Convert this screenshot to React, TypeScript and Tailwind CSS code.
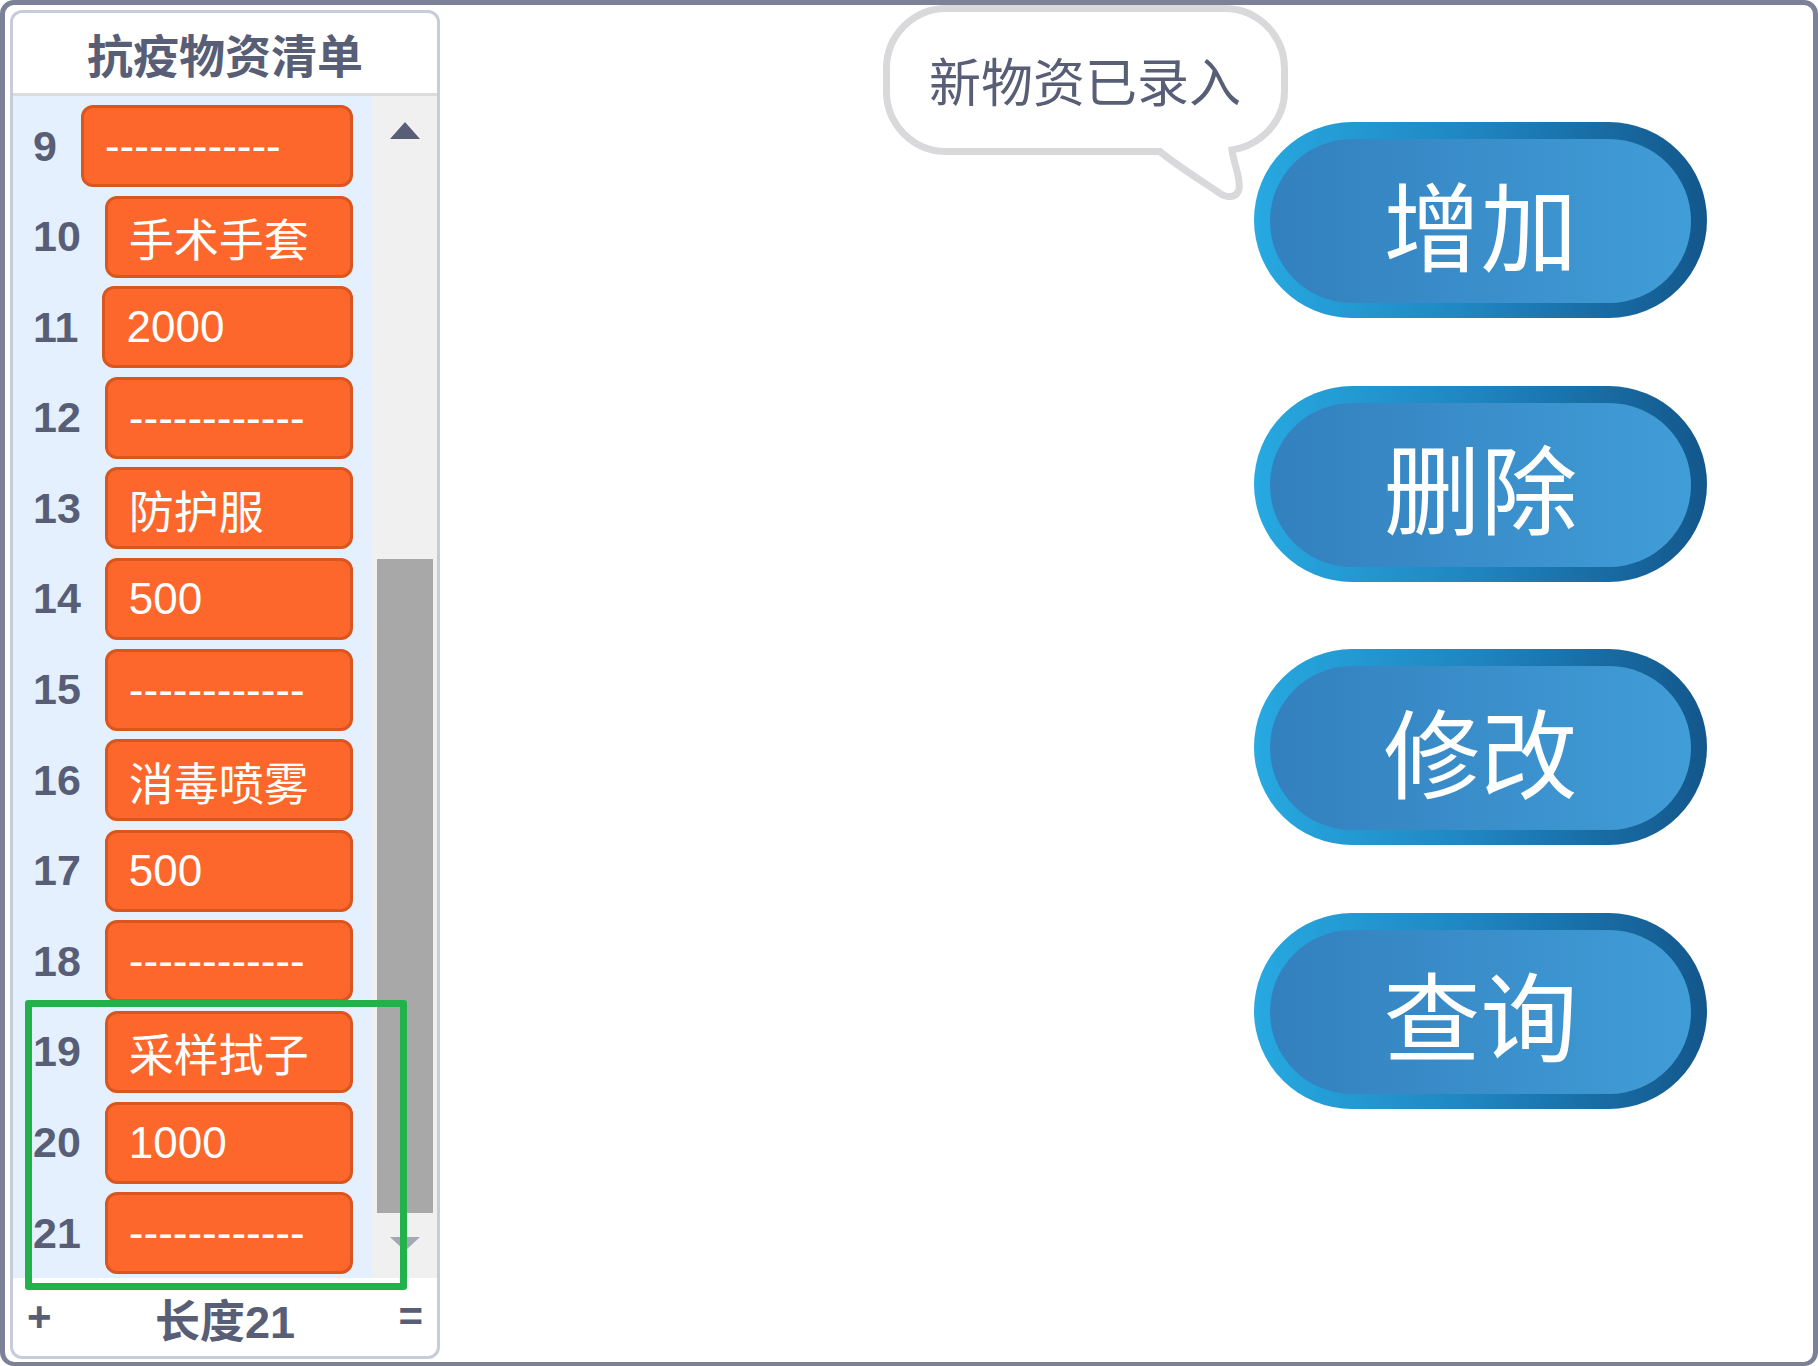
import React from "react";

const items = [
  { n: 9, v: "------------" },
  { n: 10, v: "手术手套" },
  { n: 11, v: "2000" },
  { n: 12, v: "------------" },
  { n: 13, v: "防护服" },
  { n: 14, v: "500" },
  { n: 15, v: "------------" },
  { n: 16, v: "消毒喷雾" },
  { n: 17, v: "500" },
  { n: 18, v: "------------" },
  { n: 19, v: "采样拭子" },
  { n: 20, v: "1000" },
  { n: 21, v: "------------" },
];

const buttons = ["增加", "删除", "修改", "查询"];

const isCjk = (s: string) => /[\u4e00-\u9fff]/.test(s);

const ListRow: React.FC<{ n: number; v: string }> = ({ n, v }) => (
  <div className="flex items-center h-[82px] shrink-0 pl-[20px] pr-[19px]">
    <span className="text-[43px] font-bold leading-none text-[#575e75]">{n}</span>
    <div className="ml-[24px] flex-1 h-full flex items-center pl-[21px] rounded-[12px] border-[3px] border-[#d9561f] bg-[#fd672c] text-white leading-none">
      <span className={isCjk(v) ? "text-[45px] translate-y-[5px]" : "text-[44px]"}>{v}</span>
    </div>
  </div>
);

const StageButton: React.FC<{ label: string }> = ({ label }) => (
  <div className="w-[453px] h-[196px] rounded-full p-[16px] pt-[17px] pb-[15px] bg-gradient-to-r from-[#27a9e1] via-[#1f84bf] to-[#13578c]">
    <div className="w-full h-full rounded-full bg-gradient-to-r from-[#3380be] to-[#419dd7] flex items-center justify-center">
      <span className="text-white text-[97px] leading-none font-normal font-['Noto_Sans_CJK_SC',sans-serif]">
        {label}
      </span>
    </div>
  </div>
);

export default function App() {
  return (
    <div className="relative w-[1818px] h-[1366px] bg-white border-[5px] border-b-4 border-[#7c8198] rounded-[14px] p-[5px] flex overflow-hidden font-['Liberation_Sans','Noto_Sans_CJK_SC',sans-serif]">
      {/* list monitor */}
      <div className="w-[430px] h-[1349px] shrink-0 flex flex-col rounded-[12px] border-[3px] border-[#c6cdd9] bg-white overflow-hidden">
        <div className="h-[83px] shrink-0 flex items-center justify-center border-b-[3px] border-[#dcdcdc]">
          <span className="text-[46px] font-bold leading-none text-[#575e75] translate-y-[4px]">抗疫物资清单</span>
        </div>
        <div className="h-[1182px] shrink-0 flex">
          <div className="w-[359px] bg-[#e5f0ff] flex flex-col gap-[8.6px] pt-[9px] overflow-hidden">
            {items.map((it) => (
              <ListRow key={it.n} n={it.n} v={it.v} />
            ))}
          </div>
          <div className="flex-1 bg-[#f0f0f0] flex flex-col items-center pt-[26px]">
            <div className="w-0 h-0 border-l-[15px] border-r-[15px] border-b-[17px] border-l-transparent border-r-transparent border-b-[#575e75]" />
            <div className="mt-[420px] w-[56px] h-[654px] bg-[#a8a8a8]" />
            <div className="mt-[24px] w-0 h-0 border-l-[15px] border-r-[15px] border-t-[14px] border-l-transparent border-r-transparent border-t-[#a3a8b4]" />
          </div>
        </div>
        <div className="flex-1 flex items-center justify-between px-[14px] text-[#575e75] font-bold leading-none">
          <span className="text-[42px] w-[30px]">+</span>
          <span className="text-[45px] translate-y-[5px]">长度21</span>
          <span className="text-[42px] w-[30px] text-right">=</span>
        </div>
      </div>

      {/* stage */}
      <div className="flex-1 flex flex-col gap-[67.5px] pt-[112px] pl-[814px]">
        {buttons.map((b) => (
          <StageButton key={b} label={b} />
        ))}
      </div>

      {/* speech bubble */}
      <div className="absolute left-[875px] top-[-5px] w-[412px] h-[204px]">
        <svg width="412" height="204" viewBox="880 0 412 204" className="absolute inset-0">
          <path
            d="M 946.5 8.5 H 1224.5 A 60 60 0 0 1 1284.5 68.5 V 91.5 C 1284.5 120 1262 145 1232 150 C 1234 165 1241 178 1239 189 C 1237 198 1227 199 1218 192 C 1194 176 1172 162 1160 151.5 H 946.5 A 60 60 0 0 1 886.5 91.5 V 68.5 A 60 60 0 0 1 946.5 8.5 Z"
            fill="#ffffff"
            stroke="#d9d9dc"
            strokeWidth="7"
          />
        </svg>
        <div className="absolute left-[6px] top-[8px] w-[398px] h-[143px] flex items-center justify-center">
          <span className="text-[52px] leading-none text-[#575e75] font-['Noto_Sans_CJK_SC',sans-serif]">
            新物资已录入
          </span>
        </div>
      </div>

      {/* highlight */}
      <div className="absolute left-[20px] top-[995px] w-[382px] h-[290px] border-[7px] border-[#22b24c] rounded-[3px]" />
    </div>
  );
}
